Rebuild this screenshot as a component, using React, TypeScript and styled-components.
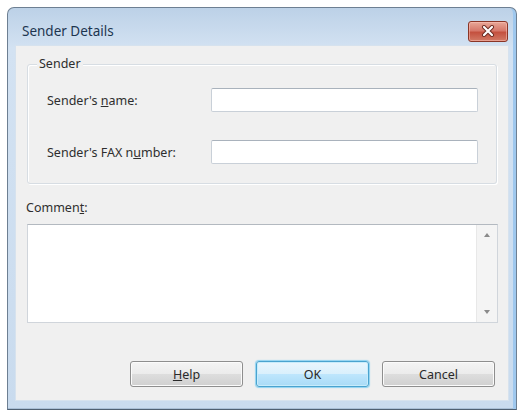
import React from "react";
import styled, { createGlobalStyle } from "styled-components";

const GlobalStyle = createGlobalStyle`
  html, body {
    margin: 0;
    background: #ffffff;
  }
  body {
    padding: 7px 0 0 7px;
    font-family: "Noto Sans", "Open Sans", sans-serif;
    font-size: 12.5px;
    color: #2e2e2e;
  }
`;

const Window = styled.div`
  width: 510px;
  height: 403px;
  box-sizing: border-box;
  border: 1px solid #6d7f92;
  border-bottom-color: #4f6072;
  border-radius: 7px 7px 0 0;
  background: linear-gradient(180deg, #bcd1e7 0%, #d3e2f2 10%, #c9dbee 100%);
  display: flex;
  flex-direction: column;
  box-shadow: inset -6px 0 0 -3px #9fc8ee, inset 0 -1px 0 #a9bfd6;
`;

const TitleBar = styled.div`
  height: 38px;
  box-sizing: border-box;
  padding: 8px 8px 0 14px;
  display: flex;
  align-items: center;
  justify-content: space-between;
  flex-shrink: 0;
`;

const Title = styled.span`
  font-size: 13.5px;
  color: #1d3550;
`;

const CloseButton = styled.div`
  width: 40px;
  height: 21px;
  box-sizing: border-box;
  border: 1px solid #8a3526;
  border-radius: 3px;
  background: linear-gradient(180deg, #e8a898 0%, #d6786a 45%, #c4513f 55%, #d27a66 100%);
  box-shadow: inset 0 0 0 1px rgba(255, 200, 190, 0.5);
  display: flex;
  align-items: center;
  justify-content: center;
`;

const Client = styled.div`
  flex: 1;
  margin: 0 8px 9px 8px;
  background: #f0f0f0;
  box-shadow: 0 0 0 1px #d6e2ee;
  display: flex;
  flex-direction: column;
  padding: 0 11px 13px 11px;
`;

const GroupBox = styled.div`
  position: relative;
  margin-top: 18px;
  height: 120px;
  box-sizing: border-box;
  border: 1px solid #d7dde3;
  border-radius: 3px;
  box-shadow: inset 1px 1px 0 #ffffff, 1px 1px 0 #ffffff;
  padding: 23px 18px 18px 19px;
  display: flex;
  flex-direction: column;
  gap: 28px;
`;

const Legend = styled.span`
  position: absolute;
  top: -9px;
  left: 9px;
  padding: 0 2px;
  background: #f0f0f0;
  line-height: 16px;
`;

const FieldRow = styled.div`
  display: flex;
  align-items: center;
  height: 24px;
`;

const FieldLabel = styled.label`
  width: 164px;
  flex-shrink: 0;
`;

const TextInput = styled.input`
  width: 267px;
  height: 24px;
  box-sizing: border-box;
  border: 1px solid #c9d0d8;
  border-top-color: #a9b2bc;
  border-radius: 2px;
  background: #ffffff;
  padding: 0 4px;
  font: inherit;
  outline: none;
`;

const CommentLabel = styled.label`
  margin: 16px 0 0 -1px;
  line-height: 16px;
`;

const CommentBox = styled.div`
  margin-top: 8px;
  height: 99px;
  width: 471px;
  box-sizing: border-box;
  border: 1px solid #d0d5db;
  border-top-color: #b3b9c0;
  background: #ffffff;
  display: flex;
`;

const CommentText = styled.textarea`
  flex: 1;
  border: none;
  resize: none;
  outline: none;
  background: transparent;
  font: inherit;
  padding: 2px 4px;
`;

const ScrollBar = styled.div`
  width: 21px;
  box-sizing: border-box;
  border-left: 1px solid #e8e8e8;
  background: #f4f4f4;
  display: flex;
  flex-direction: column;
  justify-content: space-between;
  align-items: center;
  padding: 8px 0 8px;
`;

const Arrow = styled.span<{ $down?: boolean }>`
  width: 0;
  height: 0;
  border-left: 3px solid transparent;
  border-right: 3px solid transparent;
  ${(p) => (p.$down ? "border-top: 4px solid #8a8a8a;" : "border-bottom: 4px solid #8a8a8a;")}
`;

const ButtonRow = styled.div`
  margin-top: auto;
  display: flex;
  justify-content: flex-end;
  gap: 13px;
  padding-right: 2px;
`;

const Button = styled.button<{ $default?: boolean }>`
  width: 113px;
  height: 26px;
  box-sizing: border-box;
  border-radius: 3px;
  font: inherit;
  color: #2a2a2a;
  padding: 0;
  border: 1px solid ${(p) => (p.$default ? "#4aa3cf" : "#8e8e8e")};
  background: ${(p) =>
    p.$default
      ? "linear-gradient(180deg, #eaf6fd 0%, #d9f0fc 50%, #bee6fd 51%, #a9dbf6 100%)"
      : "linear-gradient(180deg, #f4f4f4 0%, #ebebeb 50%, #dddddd 51%, #d0d0d0 100%)"};
  box-shadow: ${(p) =>
    p.$default ? "inset 0 0 0 1px #c8ecfb, 0 0 1px 1px #8fd3f1" : "inset 0 0 0 1px #fbfbfb"};
`;

const U = styled.span`
  text-decoration: underline;
`;

export default function App() {
  return (
    <>
      <GlobalStyle />
      <Window>
        <TitleBar>
          <Title>Sender Details</Title>
          <CloseButton>
            <svg width="14" height="12" viewBox="0 0 14 12">
              <path
                d="M3 2 L11 10 M11 2 L3 10"
                stroke="#6b2a20"
                strokeWidth="4"
                strokeLinecap="round"
              />
              <path
                d="M3 2 L11 10 M11 2 L3 10"
                stroke="#ffffff"
                strokeWidth="2.2"
                strokeLinecap="round"
              />
            </svg>
          </CloseButton>
        </TitleBar>
        <Client>
          <GroupBox>
            <Legend>Sender</Legend>
            <FieldRow>
              <FieldLabel>
                Sender's <U>n</U>ame:
              </FieldLabel>
              <TextInput />
            </FieldRow>
            <FieldRow>
              <FieldLabel>
                Sender's FAX n<U>u</U>mber:
              </FieldLabel>
              <TextInput />
            </FieldRow>
          </GroupBox>
          <CommentLabel>
            Commen<U>t</U>:
          </CommentLabel>
          <CommentBox>
            <CommentText />
            <ScrollBar>
              <Arrow />
              <Arrow $down />
            </ScrollBar>
          </CommentBox>
          <ButtonRow>
            <Button>
              <U>H</U>elp
            </Button>
            <Button $default>OK</Button>
            <Button>Cancel</Button>
          </ButtonRow>
        </Client>
      </Window>
    </>
  );
}
